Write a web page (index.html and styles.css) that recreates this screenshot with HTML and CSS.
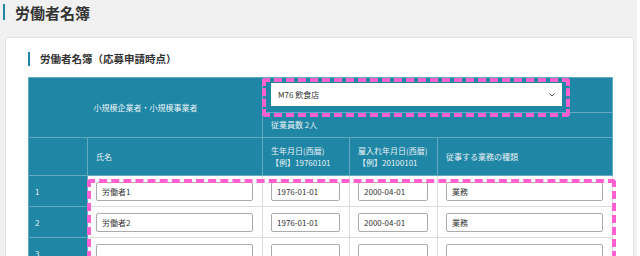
FILE: index.html
```html
<!DOCTYPE html>
<html lang="ja">
<head>
    <meta charset="UTF-8">
    <title>労働者名簿</title>
    <link rel="stylesheet" href="styles.css">
</head>
<body>
    <div class="page">
        <h1 class="page-title">労働者名簿</h1>
        <div class="card">
            <h2 class="section-title">労働者名簿（応募申請時点）</h2>
            <div class="table-wrap">
                <table class="roster">
                    <colgroup>
                        <col style="width: 59px">
                        <col style="width: 175px">
                        <col style="width: 87px">
                        <col style="width: 88px">
                        <col style="width: 175px">
                    </colgroup>
                    <tr class="head-top">
                        <th colspan="2" class="center">小規模企業者・小規模事業者</th>
                        <th colspan="3" class="split">
                            <div class="select-area">
                                <div class="select">
                                    <span>M76 飲食店</span>
                                    <svg width="6" height="4" viewBox="0 0 6 4"><path d="M0.5 0.5 L3 3 L5.5 0.5" fill="none" stroke="#555" stroke-width="1"/></svg>
                                </div>
                            </div>
                            <div class="count">従業員数 2人</div>
                        </th>
                    </tr>
                    <tr class="head-cols">
                        <th></th>
                        <th>氏名</th>
                        <th>生年月日(西暦)<br>【例】19760101</th>
                        <th>雇入れ年月日(西暦)<br>【例】20100101</th>
                        <th>従事する業務の種類</th>
                    </tr>
                    <tr>
                        <td class="num">1</td>
                        <td><input class="field" value="労働者1"></td>
                        <td><input class="field" value="1976-01-01"></td>
                        <td><input class="field" value="2000-04-01"></td>
                        <td><input class="field" value="業務"></td>
                    </tr>
                    <tr>
                        <td class="num">2</td>
                        <td><input class="field" value="労働者2"></td>
                        <td><input class="field" value="1976-01-01"></td>
                        <td><input class="field" value="2000-04-01"></td>
                        <td><input class="field" value="業務"></td>
                    </tr>
                    <tr>
                        <td class="num">3</td>
                        <td><input class="field" value=""></td>
                        <td><input class="field" value=""></td>
                        <td><input class="field" value=""></td>
                        <td><input class="field" value=""></td>
                    </tr>
                </table>
                <div class="mark mark-select"></div>
                <div class="mark mark-rows"></div>
            </div>
        </div>
    </div>
</body>
</html>
```

FILE: styles.css
```css
body {
    margin: 0;
    background-color: #fff;
    font-family: "Noto Sans CJK JP", "Noto Sans", sans-serif;
    color: #333;
    overflow: hidden;
}
.page {
    width: 637px;
    height: 256px;
    background-color: #f1f1f1;
    padding: 0 3px 0 5px;
    box-sizing: border-box;
}
.page-title {
    margin: 0 0 0 -1px;
    height: 37px;
    padding: 3px 0 0 11px;
    box-sizing: border-box;
    font-size: 15px;
    line-height: 19px;
    font-weight: bold;
    border-left: 2px solid #1f86a5;
    border-left: none;
    position: relative;
}
.page-title::before {
    content: "";
    position: absolute;
    left: -1px;
    top: 4px;
    width: 2px;
    height: 16px;
    background-color: #1f86a5;
}
.card {
    background-color: #fff;
    border: 1px solid #e2e2e2;
    border-radius: 3px;
    height: 240px;
    padding: 14px 21px 0 22px;
    box-sizing: border-box;
}
.section-title {
    margin: 0 0 11px 0;
    padding-left: 10px;
    font-size: 10.5px;
    line-height: 14px;
    font-weight: bold;
    border-left: 2px solid #1f86a5;
}
.table-wrap {
    position: relative;
}
.roster {
    width: 584px;
    table-layout: fixed;
    border-collapse: collapse;
    font-size: 8px;
}
.roster th {
    background-color: #1f86a5;
    color: #e6f1f5;
    font-weight: normal;
    text-align: left;
    border: 1px solid #63a9c1;
    padding: 0 8px;
    line-height: 12px;
}
.roster th.center {
    text-align: center;
}
.head-top th {
    height: 59px;
}
.roster th.split {
    padding: 0;
    vertical-align: top;
}
.select-area {
    height: 35px;
    padding: 5px 50px 0 8px;
    box-sizing: border-box;
    border-bottom: 1px solid #63a9c1;
}
.select {
    height: 23px;
    background-color: #fff;
    color: #333;
    display: flex;
    align-items: center;
    justify-content: space-between;
    padding: 0 7px;
}
.count {
    height: 23px;
    line-height: 23px;
    padding-left: 8px;
}
.head-cols th {
    height: 37px;
}
.roster td {
    border: 1px solid #dcdcdc;
    height: 30px;
    padding: 0 9px 0 8px;
    background-color: #fff;
}
.roster td.num {
    background-color: #1f86a5;
    color: #e6f1f5;
    border-color: #63a9c1;
    padding-left: 6px;
}
.field {
    width: 100%;
    height: 19px;
    box-sizing: border-box;
    border: 1px solid #ababab;
    border-radius: 2px;
    padding: 0 5px;
    font-family: "Noto Sans CJK JP", sans-serif;
    font-size: 8px;
    color: #333;
}
.mark {
    position: absolute;
    border: 4px dashed #ff5fcf;
    border-radius: 4px;
}
.mark-select {
    left: 234px;
    top: 1px;
    width: 300px;
    height: 31px;
}
.mark-rows {
    left: 59px;
    top: 102px;
    width: 521px;
    height: 120px;
}
```
